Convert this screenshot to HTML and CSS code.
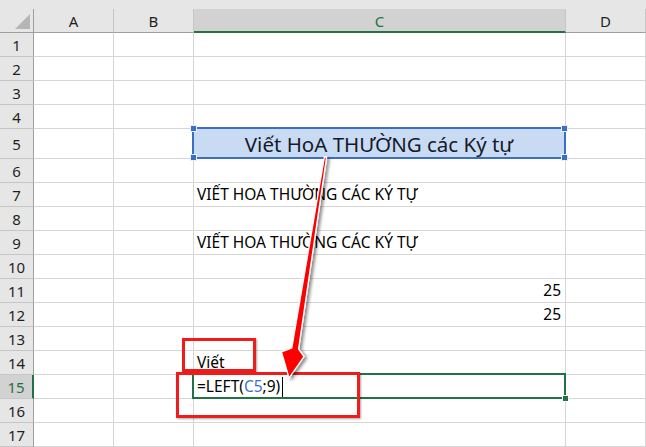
FILE: index.html
```html
<!DOCTYPE html>
<html>
<head>
<meta charset="utf-8">
<link rel="stylesheet" href="styles.css">
</head>
<body>
<div class="sheet">
  <div class="strip"></div>

  <div class="corner"><span class="tri"></span></div>
  <div class="ch">A</div>
  <div class="ch">B</div>
  <div class="ch ch-sel">C</div>
  <div class="ch">D</div>

  <div class="rh">1</div><div class="c"></div><div class="c"></div><div class="c"></div><div class="c"></div>
  <div class="rh">2</div><div class="c"></div><div class="c"></div><div class="c"></div><div class="c"></div>
  <div class="rh">3</div><div class="c"></div><div class="c"></div><div class="c"></div><div class="c"></div>
  <div class="rh">4</div><div class="c"></div><div class="c"></div><div class="c"></div><div class="c"></div>
  <div class="rh">5</div><div class="c"></div><div class="c"></div>
  <div class="c c-shape">
    <div class="shape">
      <span class="shape-text">Viết HoA THƯỜNG các Ký tự</span>
      <span class="hdl hdl-tl"></span><span class="hdl hdl-tr"></span>
      <span class="hdl hdl-bl"></span><span class="hdl hdl-br"></span>
    </div>
  </div>
  <div class="c"></div>
  <div class="rh">6</div><div class="c"></div><div class="c"></div><div class="c"></div><div class="c"></div>
  <div class="rh">7</div><div class="c"></div><div class="c"></div><div class="c txt">VIẾT HOA THƯỜNG CÁC KÝ TỰ</div><div class="c"></div>
  <div class="rh">8</div><div class="c"></div><div class="c"></div><div class="c"></div><div class="c"></div>
  <div class="rh">9</div><div class="c"></div><div class="c"></div><div class="c txt">VIẾT HOA THƯỜNG CÁC KÝ TỰ</div><div class="c"></div>
  <div class="rh">10</div><div class="c"></div><div class="c"></div><div class="c"></div><div class="c"></div>
  <div class="rh">11</div><div class="c"></div><div class="c"></div><div class="c txt num">25</div><div class="c"></div>
  <div class="rh">12</div><div class="c"></div><div class="c"></div><div class="c txt num">25</div><div class="c"></div>
  <div class="rh">13</div><div class="c"></div><div class="c"></div><div class="c"></div><div class="c"></div>
  <div class="rh">14</div><div class="c"></div><div class="c"></div><div class="c txt">Viết</div><div class="c"></div>
  <div class="rh rh-sel">15</div><div class="c"></div><div class="c"></div>
  <div class="c txt c-active">=LEFT(<span class="ref">C5</span>;9)<span class="caret"></span><span class="fill-handle"></span></div>
  <div class="c"></div>
  <div class="rh">16</div><div class="c"></div><div class="c"></div><div class="c"></div><div class="c"></div>
  <div class="rh">17</div><div class="c"></div><div class="c"></div><div class="c"></div><div class="c"></div>

  <div class="mark mark-1"></div>
  <div class="mark mark-2"></div>

  <svg class="arrow" width="646" height="447" viewBox="0 0 646 447">
    <defs>
      <filter id="sh" x="-50%" y="-10%" width="200%" height="130%">
        <feDropShadow dx="2.5" dy="1.5" stdDeviation="1.5" flood-color="#000" flood-opacity="0.45"/>
      </filter>
    </defs>
    <polygon filter="url(#sh)" points="324.4,157 326.6,157 298.6,349 304,356.5 289,378 281.5,352 291.8,348" fill="#ff0000" stroke="#ffffff" stroke-width="1.3" stroke-linejoin="miter"/>
  </svg>
</div>
</body>
</html>
```

FILE: styles.css
```css
* { box-sizing: border-box; }
html, body { margin: 0; padding: 0; background: #ffffff; }
body { width: 646px; height: 447px; overflow: hidden; }

.sheet {
  position: relative;
  display: grid;
  grid-template-columns: 34px 80px 80px 372px 80px;
  grid-template-rows: 9px 24px repeat(4, 24px) 30px repeat(12, 24px);
  width: 646px;
  font-family: "Noto Sans", "Open Sans", sans-serif;
  font-size: 15px;
  color: #000;
}

.strip {
  grid-column: 1 / span 5;
  background: #e6e6e6;
}

.corner {
  position: relative;
  background: #e6e6e6;
  border-right: 1px solid #9f9f9f;
  border-bottom: 1px solid #9f9f9f;
}
.tri {
  position: absolute;
  right: 3px;
  bottom: 3px;
  width: 0;
  height: 0;
  border-left: 15px solid transparent;
  border-bottom: 15px solid #b5b5b5;
}

.ch {
  background: #e6e6e6;
  border-right: 1px solid #c6c6c6;
  border-bottom: 1px solid #9f9f9f;
  display: flex;
  align-items: center;
  justify-content: center;
  color: #1f1f1f;
  font-size: 15px;
  padding-top: 1px;
}
.ch-sel {
  background: #d2d2d2;
  color: #217346;
  border-bottom: 2px solid #217346;
  padding-top: 2px;
}

.rh {
  background: #e6e6e6;
  border-right: 1px solid #9f9f9f;
  border-bottom: 1px solid #c6c6c6;
  display: flex;
  align-items: center;
  justify-content: center;
  color: #1f1f1f;
  font-size: 15px;
  padding-top: 1px;
}
.rh-sel {
  background: #d2d2d2;
  color: #217346;
  border-right: 2px solid #217346;
}

.c {
  border-right: 1px solid #d6d6d6;
  border-bottom: 1px solid #d6d6d6;
}

.txt {
  position: relative;
  display: flex;
  align-items: flex-end;
  padding: 0 4px 1px 3px;
  font-size: 15.5px;
  line-height: 21px;
  white-space: nowrap;
}
.num { justify-content: flex-end; }

.c-shape { position: relative; }
.shape {
  position: absolute;
  top: -2px;
  left: -2px;
  right: -1px;
  bottom: -1px;
  background: #c9dbf2;
  border: 2px solid #3a6fc4;
  display: flex;
  align-items: center;
  justify-content: center;
  z-index: 2;
}
.shape-text {
  font-size: 20.5px;
  color: #141a2b;
  padding-top: 1px;
}
.hdl {
  position: absolute;
  width: 7px;
  height: 7px;
  background: #3a6fc4;
  border: 1px solid #e9eef8;
}
.hdl-tl { left: -4px; top: -4px; }
.hdl-tr { right: -4px; top: -4px; }
.hdl-bl { left: -4px; bottom: -4px; }
.hdl-br { right: -4px; bottom: -4px; }

.c-active::before {
  content: "";
  position: absolute;
  top: -2px;
  left: -2px;
  right: -1px;
  bottom: -1px;
  border: 2px solid #217346;
  pointer-events: none;
}
.ref { color: #3b73d1; }
.caret {
  display: inline-block;
  width: 1px;
  height: 21px;
  background: #000;
  margin-left: 2px;
  align-self: flex-end;
  margin-bottom: -1px;
}
.fill-handle {
  position: absolute;
  right: -4px;
  bottom: -4px;
  width: 7px;
  height: 7px;
  background: #217346;
  border: 1px solid #ffffff;
}

.mark {
  position: absolute;
  border: 3px solid #ee1c1c;
  box-shadow: 1px 1px 2px rgba(0,0,0,0.35);
  z-index: 3;
}
.mark-1 { left: 182px; top: 338px; width: 74px; height: 34px; }
.mark-2 { left: 176px; top: 372px; width: 184px; height: 46px; }

.arrow {
  position: absolute;
  left: 0;
  top: 0;
  z-index: 4;
  pointer-events: none;
}
```
